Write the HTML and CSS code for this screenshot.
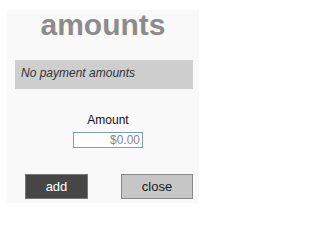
FILE: index.html
```html
<!DOCTYPE html>
<html>
<head>
<meta charset="utf-8">
<link rel="stylesheet" href="styles.css">
</head>
<body>
<div class="panel">
  <h1 class="title">amounts</h1>
  <div class="empty">No payment amounts</div>
  <div class="field">
    <label class="label" for="amt">Amount</label>
    <input id="amt" class="input" type="text" value="$0.00">
  </div>
  <div class="actions">
    <button class="btn btn-add">add</button>
    <button class="btn btn-close">close</button>
  </div>
</div>
</body>
</html>
```
FILE: styles.css
```css
html, body {
  margin: 0;
  padding: 0;
  background: #ffffff;
}
body {
  font-family: "Liberation Sans", Arial, sans-serif;
}
.panel {
  margin: 10px 0 0 7px;
  width: 192px;
  height: 193px;
  background: #f9f9f9;
  display: flex;
  flex-direction: column;
}
.title {
  margin: 0;
  font-size: 30px;
  line-height: 30px;
  font-weight: bold;
  color: #8c8c8c;
  text-align: center;
}
.empty {
  margin: 20px 6px 0 8px;
  height: 29px;
  box-sizing: border-box;
  padding: 6px 6px 9px 6px;
  background: #cecece;
  font-size: 12px;
  line-height: 14px;
  font-style: italic;
  color: #333333;
}
.field {
  margin-top: 24px;
  padding-left: 10px;
  display: flex;
  flex-direction: column;
  align-items: center;
}
.label {
  font-size: 12px;
  line-height: 14px;
  color: #111111;
}
.input {
  margin-top: 5px;
  width: 70px;
  height: 16px;
  box-sizing: border-box;
  border: 1px solid #7f9db9;
  background: #ffffff;
  padding: 0 2px 0 0;
  font-family: "Liberation Sans", Arial, sans-serif;
  font-size: 12px;
  color: #888888;
  text-align: right;
  outline: none;
}
.actions {
  margin-top: 26px;
  padding: 0 6px 0 18px;
  display: flex;
  justify-content: space-between;
}
.btn {
  height: 25px;
  box-sizing: border-box;
  padding: 0;
  font-family: "Liberation Sans", Arial, sans-serif;
  font-size: 13px;
}
.btn-add {
  width: 63px;
  background: #464646;
  border: 1px solid #777777;
  color: #ffffff;
}
.btn-close {
  width: 72px;
  background: #c6c6c6;
  border: 1px solid #888888;
  color: #1a1a1a;
}
```
